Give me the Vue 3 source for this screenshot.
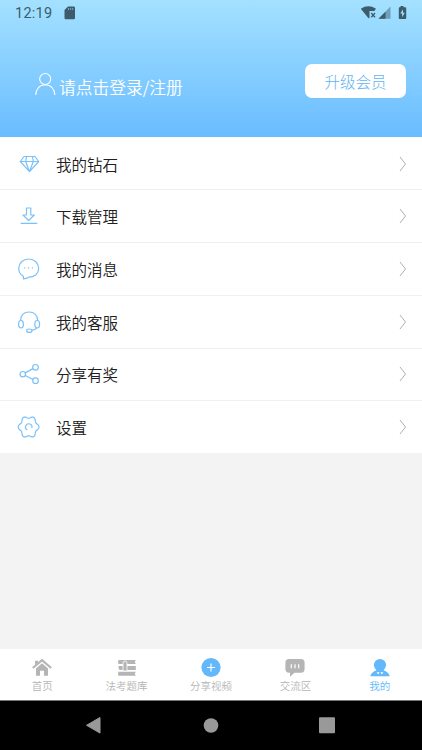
<script setup>
const menu = [
  { icon: 'diamond', label: '我的钻石' },
  { icon: 'download', label: '下载管理' },
  { icon: 'message', label: '我的消息' },
  { icon: 'service', label: '我的客服' },
  { icon: 'share', label: '分享有奖' },
  { icon: 'settings', label: '设置' },
]
const tabs = [
  { icon: 'home', label: '首页' },
  { icon: 'bank', label: '法考题库' },
  { icon: 'plus', label: '分享视频' },
  { icon: 'chat', label: '交流区' },
  { icon: 'mine', label: '我的', active: true },
]

// Six-lobed outline of the settings gear
const gear = Array.from({ length: 72 }, (_, i) => {
  const a = (i * Math.PI) / 36
  const r = 9.3 + 1.1 * Math.cos(6 * a)
  return `${(13.6 + r * Math.cos(a)).toFixed(2)},${(14 + 1.07 * r * Math.sin(a)).toFixed(2)}`
}).join(' ')
</script>

<template>
  <div class="screen">
    <header class="header">
      <div class="status">
        <span class="time">12:19</span>
        <svg class="sd" width="12" height="14" viewBox="0 0 12 14">
          <path d="M4 .5h5.700q1.300 0 1.300 1.300v10.200q0 1.300-1.300 1.300H1.800Q.5 13.300.5 12V4z" fill="#3d5c6b" />
          <path d="M4.500 2v2M6.600 2v2M8.700 2v2" stroke="#7ba7bc" stroke-width="1" />
        </svg>
        <svg class="signals" width="48" height="16" viewBox="0 0 48 16">
          <path d="M.8 3.700Q8.300-1.200 16 3.700L14.300 6H9.500v7L8.500 13.300z" fill="#3d5c6b" />
          <path d="M11.300 8l3.700 4.200M15 8l-3.700 4.200" stroke="#3d5c6b" stroke-width="1.300" />
          <path d="M18.500 13.800L30.500 1.500v12.300z" fill="#6f9fb9" />
          <path d="M18.500 13.800L25.500 6.700v7.100z" fill="#3d5c6b" />
          <path d="M40.500 1h3v1.200h2q.7 0 .7.700v10.300q0 .8-.7.800h-6q-.7 0-.7-.8V2.900q0-.7.700-.7h1z" fill="#3d5c6b" />
          <path d="M43 4.300l-2.700 4.300h1.800v3.600l2.700-4.500H43z" fill="#a4dcf8" />
        </svg>
      </div>
      <div class="account">
        <div class="login">
          <svg width="22" height="24" viewBox="0 0 22 24" fill="none" stroke="#fff" stroke-width="1.100">
            <circle cx="10.200" cy="7" r="5.500" />
            <path d="M.8 23Q1.300 13.200 10.200 12.700Q19.200 13.200 19.800 23" />
          </svg>
          <span>请点击登录/注册</span>
        </div>
        <button class="upgrade">升级会员</button>
      </div>
    </header>

    <main class="menu">
      <div v-for="item in menu" :key="item.icon" class="row">
        <svg class="row-icon" width="28" height="28" viewBox="0 0 28 28">
          <g v-if="item.icon === 'diamond'">
            <path d="M9 6.500h11l3.700 5L14.500 21.700 5.300 11.500zM5.300 11.500h18.400M11.500 6.500l-.8 5 3.800 10.200 3.800-10.200-.8-5" />
          </g>
          <g v-else-if="item.icon === 'download'">
            <path d="M11.500 6h4.300v7h3.500L13.600 18.500 8 13h3.500zM5.700 21.300h16.500" />
          </g>
          <g v-else-if="item.icon === 'message'">
            <path d="M8.400 21.300C5.300 19.700 3.700 17 3.700 13.300C3.700 8.100 8 4 13.700 4S23.700 8.100 23.700 13.300S19.400 22.200 13.900 22.200Q11.300 23.600 8.400 23.900z" />
            <path class="dots" d="M9.200 12.800h1.200M13 12.800h1.200M16.800 12.800h1.200" />
          </g>
          <g v-else-if="item.icon === 'service'">
            <ellipse cx="6" cy="16.200" rx="2.400" ry="3.700" />
            <ellipse cx="22.200" cy="16.200" rx="2.400" ry="3.700" />
            <path d="M5.500 12.500C6 7 9.300 4 14 4S22.200 7 22.700 12.500M21.700 19.900Q20.500 22 17 22.200" />
            <ellipse cx="14.300" cy="22.700" rx="2.700" ry="1.700" />
          </g>
          <g v-else-if="item.icon === 'share'">
            <circle cx="7.800" cy="14.200" r="2.700" />
            <circle cx="20.500" cy="7.300" r="2.800" />
            <circle cx="20.500" cy="20.700" r="2.800" />
            <path d="M10.200 12.900l7.900-4.300M10.200 15.500l7.900 4" />
          </g>
          <g v-else>
            <polygon :points="gear" />
            <path d="M12.300 16.900A3.200 3.200 0 1 1 16.800 15" />
          </g>
        </svg>
        <span class="label">{{ item.label }}</span>
        <svg class="arrow" width="8" height="16" viewBox="0 0 8 16">
          <path d="M1 1l5.500 7L1 15" fill="none" stroke="#b0b0b0" stroke-width="1" />
        </svg>
      </div>
    </main>

    <nav class="tabs">
      <div v-for="tab in tabs" :key="tab.icon" class="tab" :class="{ active: tab.active }">
        <svg width="24" height="22" viewBox="0 0 24 22">
          <g v-if="tab.icon === 'home'">
            <path d="M2.800 11L12 3.200 21.200 11" fill="none" stroke="currentColor" stroke-width="2.100" />
            <path d="M5 3.800h3v2L5 8.300zM12 6.300l6 5.200v7.200h-4v-5h-4v5H6v-7.200z" fill="currentColor" />
          </g>
          <g v-else-if="tab.icon === 'bank'" fill="currentColor">
            <path d="M3.500 2.900h17.300l-1 2 1 2.200H3.500q-1-2 0-4.200zM3.500 9h17.300v4H4.500l-1-2zM3.500 14.800h17.300l-1 2 1 2H3.500q-1-2 0-4z" />
            <path d="M8 14V6.300q0-2.300 2-2.300t2 2.300V14z" stroke="#fff" stroke-width=".8" />
          </g>
          <g v-else-if="tab.icon === 'plus'">
            <circle cx="12" cy="10.500" r="9.600" fill="#62b8fb" />
            <path d="M12 6.500v8M8 10.500h8" stroke="#fff" stroke-width="1.200" />
          </g>
          <g v-else-if="tab.icon === 'chat'">
            <path d="M6 2h12q3.600 0 3.600 3.600v6.500q0 3.600-3.600 3.600h-6.500l-4.500 4v-4H6q-3.600 0-3.600-3.600V5.600Q2.400 2 6 2z" fill="currentColor" />
            <path d="M8.300 7.300v4M12 7.300v4M15.700 7.300v4" stroke="#fff" stroke-width="1.200" />
          </g>
          <g v-else>
            <circle cx="12" cy="8" r="6.100" fill="currentColor" />
            <path d="M2.300 19.300Q3 15.500 8 13.500L10 12h4l2 1.500Q21 15.500 21.700 19.300z" fill="currentColor" />
            <path d="M8.500 15.200h3l-1.200 2.200zM12.500 15.200h3l-1.800 2.200z" fill="#fff" />
          </g>
        </svg>
        <span>{{ tab.label }}</span>
      </div>
    </nav>

    <footer class="system">
      <svg width="16" height="18" viewBox="0 0 16 18"><path d="M.5 8.300L14 .5v15.600z" fill="#999" stroke="#999" stroke-linejoin="round" /></svg>
      <svg width="16" height="18" viewBox="0 0 16 18"><circle cx="8" cy="8.500" r="7.300" fill="#999" /></svg>
      <svg width="16" height="18" viewBox="0 0 16 18"><rect x="0" y=".3" width="16" height="16" rx="1" fill="#999" /></svg>
    </footer>
  </div>
</template>

<style>
body { margin: 0; }
</style>

<style scoped>
.screen {
  width: 422px;
  height: 750px;
  display: flex;
  flex-direction: column;
  overflow: hidden;
  background: #f3f3f3;
  font-family: "Noto Sans CJK SC", sans-serif;
}
svg { display: block; flex: none; }
.header {
  height: 137px;
  background: linear-gradient(#a4e1ff, #69bcff);
}
.status {
  height: 26px;
  display: flex;
  align-items: center;
  padding: 0 14px 0 15px;
  color: #3d5c6b;
}
.time {
  font: 400 14.500px/28px Roboto, sans-serif;
  letter-spacing: 0.25px;
  padding-top: 1px;
  width: 49px;
}
.signals { margin-left: auto; }
.account {
  display: flex;
  justify-content: space-between;
  padding: 38px 16px 0 35px;
}
.login {
  height: 40px;
  display: flex;
  align-items: center;
  gap: 2px;
  color: #fff;
  font-size: 16.750px;
  font-weight: 350;
}
.login svg { margin-bottom: 1px; }
.login span { padding-top: 5px; white-space: nowrap; }
.upgrade {
  width: 101px;
  height: 34px;
  border: 0;
  border-radius: 7px;
  padding: 0;
  background: #fff;
  color: #62b4f4;
  font: 300 15.500px/34px "Noto Sans CJK SC", sans-serif;
}
.menu {
  padding-top: 0.800px;
  background: #fff;
}
.row {
  height: 52.700px;
  box-sizing: border-box;
  border-bottom: 1px solid #f0f0f0;
  display: flex;
  align-items: center;
  padding: 0 15px;
}
.row:last-child {
  height: 52px;
  border-bottom-color: transparent;
}
.row-icon {
  fill: none;
  stroke: #7bc1f8;
  stroke-width: 1.200;
  stroke-linejoin: round;
}
.dots { stroke-width: 1.300; }
.label {
  margin-left: 13px;
  color: #202020;
  font-size: 15.500px;
  font-weight: 350;
  line-height: 24px;
}
.arrow { margin-left: auto; }
.tabs {
  margin-top: auto;
  height: 51px;
  display: grid;
  grid-template-columns: repeat(5, 1fr);
  background: #fff;
}
.tab {
  display: flex;
  flex-direction: column;
  align-items: center;
  padding-top: 8px;
  color: #b5b5b5;
  font-size: 10.500px;
  font-weight: 350;
  line-height: 14px;
}
.tab.active { color: #62b8fb; }
.system {
  height: 50px;
  box-sizing: border-box;
  border-top: 1px solid #777;
  display: flex;
  align-items: center;
  justify-content: space-between;
  padding: 0 87px 0 86px;
  background: #000;
}
</style>
